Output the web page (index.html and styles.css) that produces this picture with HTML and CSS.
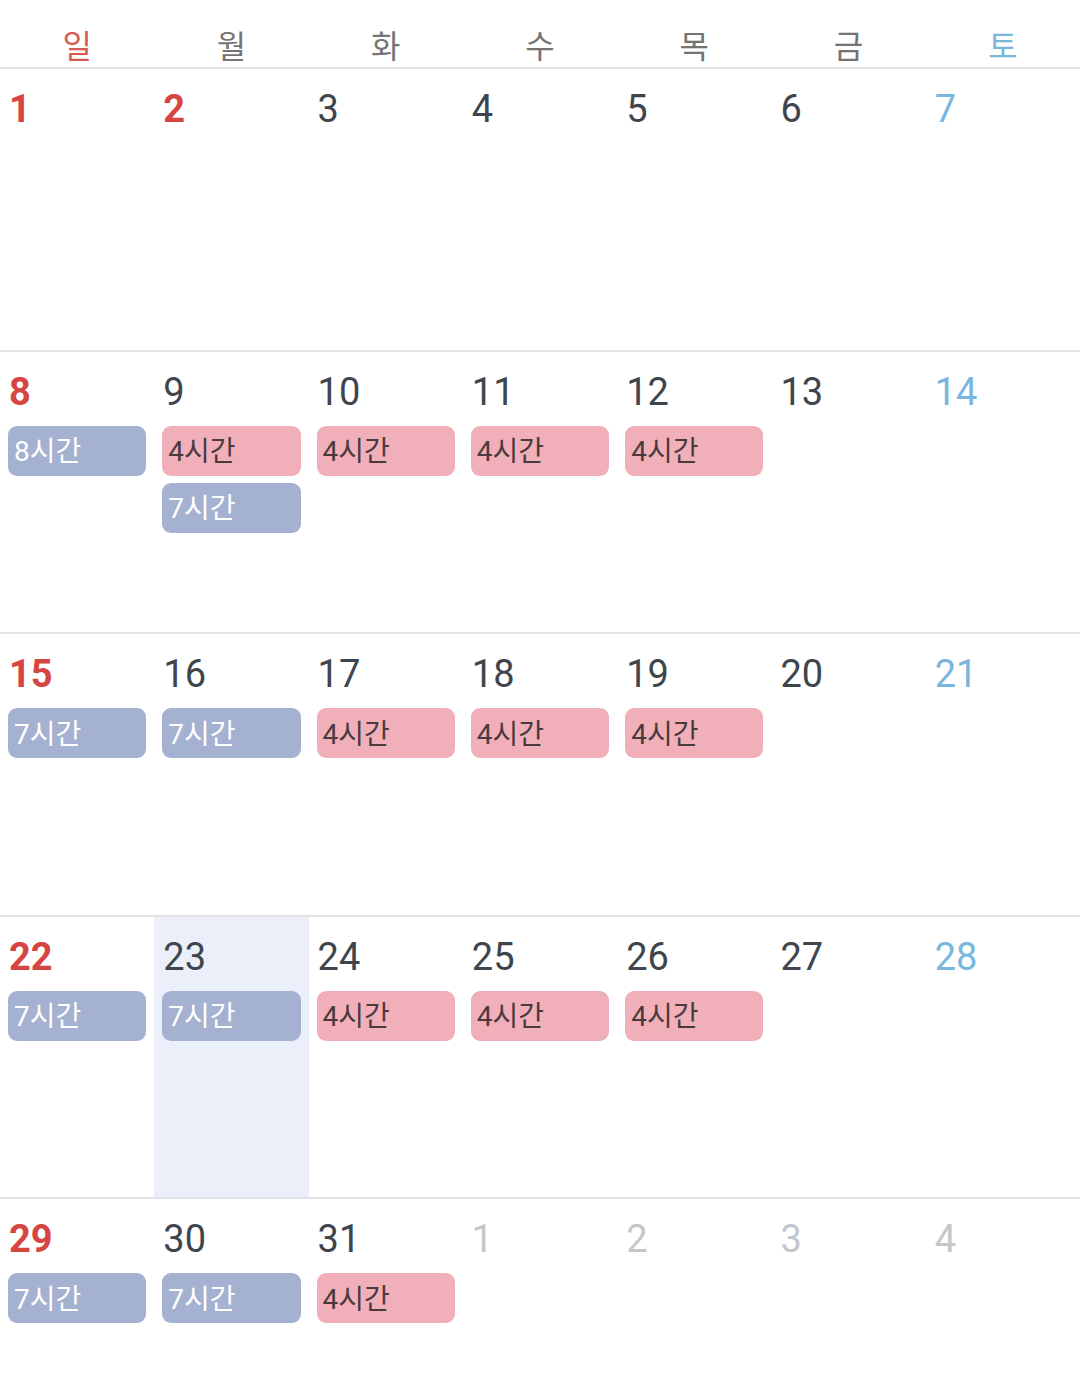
FILE: index.html
```html
<!DOCTYPE html>
<html lang="ko">
<head>
<meta charset="utf-8">
<title>달력</title>
<link rel="stylesheet" href="styles.css">
</head>
<body>
<div class="calendar">
  <div class="weekdays">
    <div class="wd sun">일</div>
    <div class="wd">월</div>
    <div class="wd">화</div>
    <div class="wd">수</div>
    <div class="wd">목</div>
    <div class="wd">금</div>
    <div class="wd sat">토</div>
  </div>

  <div class="week">
    <div class="day"><div class="num sun">1</div></div>
    <div class="day"><div class="num sun">2</div></div>
    <div class="day"><div class="num">3</div></div>
    <div class="day"><div class="num">4</div></div>
    <div class="day"><div class="num">5</div></div>
    <div class="day"><div class="num">6</div></div>
    <div class="day"><div class="num sat">7</div></div>
  </div>

  <div class="week">
    <div class="day"><div class="num sun">8</div><div class="ev blue">8시간</div></div>
    <div class="day"><div class="num">9</div><div class="ev pink">4시간</div><div class="ev blue">7시간</div></div>
    <div class="day"><div class="num">10</div><div class="ev pink">4시간</div></div>
    <div class="day"><div class="num">11</div><div class="ev pink">4시간</div></div>
    <div class="day"><div class="num">12</div><div class="ev pink">4시간</div></div>
    <div class="day"><div class="num">13</div></div>
    <div class="day"><div class="num sat">14</div></div>
  </div>

  <div class="week">
    <div class="day"><div class="num sun">15</div><div class="ev blue">7시간</div></div>
    <div class="day"><div class="num">16</div><div class="ev blue">7시간</div></div>
    <div class="day"><div class="num">17</div><div class="ev pink">4시간</div></div>
    <div class="day"><div class="num">18</div><div class="ev pink">4시간</div></div>
    <div class="day"><div class="num">19</div><div class="ev pink">4시간</div></div>
    <div class="day"><div class="num">20</div></div>
    <div class="day"><div class="num sat">21</div></div>
  </div>

  <div class="week">
    <div class="day"><div class="num sun">22</div><div class="ev blue">7시간</div></div>
    <div class="day today"><div class="num">23</div><div class="ev blue">7시간</div></div>
    <div class="day"><div class="num">24</div><div class="ev pink">4시간</div></div>
    <div class="day"><div class="num">25</div><div class="ev pink">4시간</div></div>
    <div class="day"><div class="num">26</div><div class="ev pink">4시간</div></div>
    <div class="day"><div class="num">27</div></div>
    <div class="day"><div class="num sat">28</div></div>
  </div>

  <div class="week last">
    <div class="day"><div class="num sun">29</div><div class="ev blue">7시간</div></div>
    <div class="day"><div class="num">30</div><div class="ev blue">7시간</div></div>
    <div class="day"><div class="num">31</div><div class="ev pink">4시간</div></div>
    <div class="day"><div class="num other">1</div></div>
    <div class="day"><div class="num other">2</div></div>
    <div class="day"><div class="num other">3</div></div>
    <div class="day"><div class="num other">4</div></div>
  </div>
</div>
</body>
</html>
```

FILE: styles.css
```css
html, body {
  margin: 0;
  padding: 0;
  background: #ffffff;
}

body {
  width: 1080px;
  height: 1382px;
  overflow: hidden;
  font-family: Roboto, "Noto Sans CJK KR", "Noto Sans", sans-serif;
}

.calendar {
  display: flex;
  flex-direction: column;
}

.weekdays {
  display: grid;
  grid-template-columns: repeat(7, 1fr);
  height: 67px;
  border-bottom: 2px solid #e2e2e2;
}

.wd {
  display: flex;
  align-items: center;
  justify-content: center;
  padding-top: 20px;
  box-sizing: border-box;
  height: 67px;
  font-family: "Noto Sans CJK KR", sans-serif;
  font-size: 32px;
  line-height: 32px;
  color: #747474;
}

.wd.sun { color: #d85a55; }
.wd.sat { color: #7ab7dc; }

.week {
  display: grid;
  grid-template-columns: repeat(7, 1fr);
  height: 280.5px;
  border-bottom: 2px solid #e2e2e2;
}

.week.last {
  height: 183px;
  border-bottom: none;
}

.day {
  display: flex;
  flex-direction: column;
  padding: 21px 8px 0 8px;
  box-sizing: border-box;
  min-width: 0;
}

.day.today {
  background: #ebeffa;
}

.num {
  font-size: 38px;
  line-height: 38px;
  height: 38px;
  color: #3e454c;
  padding-left: 1px;
  margin-bottom: 15px;
}

.num.sun { color: #d64541; font-weight: 700; }
.num.sat { color: #79b6de; }
.num.other { color: #c2c7cc; }

.ev {
  height: 50px;
  border-radius: 9px;
  display: flex;
  align-items: center;
  padding-left: 6px;
  padding-top: 3px;
  font-size: 28px;
  line-height: 30px;
  margin-bottom: 7px;
  box-sizing: border-box;
  white-space: nowrap;
}

.ev.blue {
  background: #a4b1d0;
  color: #ffffff;
}

.ev.pink {
  background: #f1b0b9;
  color: #4a3a3e;
}
```
